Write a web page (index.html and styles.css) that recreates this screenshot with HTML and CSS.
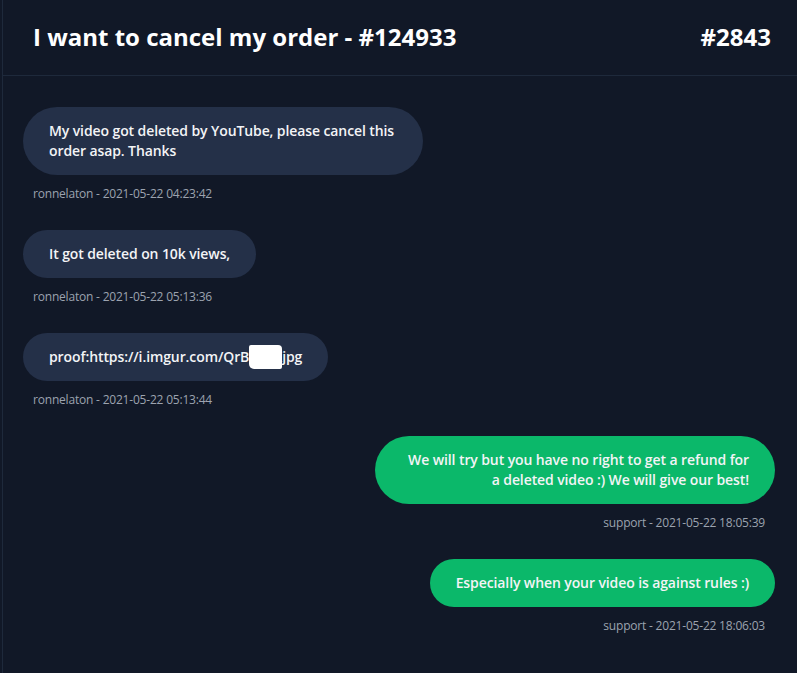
FILE: index.html
```html
<!DOCTYPE html>
<html>
<head>
<meta charset="utf-8">
<link rel="stylesheet" href="styles.css">
</head>
<body>
<div class="panel">
  <header class="head">
    <h1 class="title">I want to cancel my order - #124933</h1>
    <span class="ticket">#2843</span>
  </header>
  <main class="thread">
    <div class="msg">
      <div class="bubble">My video got deleted by YouTube, please cancel this order asap. Thanks</div>
      <div class="meta">ronnelaton - 2021-05-22 04:23:42</div>
    </div>
    <div class="msg">
      <div class="bubble">It got deleted on 10k views,</div>
      <div class="meta">ronnelaton - 2021-05-22 05:13:36</div>
    </div>
    <div class="msg">
      <div class="bubble">proof:https://i.imgur.com/QrB<span class="redact">XXXX</span>jpg</div>
      <div class="meta">ronnelaton - 2021-05-22 05:13:44</div>
    </div>
    <div class="msg mine">
      <div class="bubble">We will try but you have no right to get a refund for a deleted video :) We will give our best!</div>
      <div class="meta">support - 2021-05-22 18:05:39</div>
    </div>
    <div class="msg mine">
      <div class="bubble">Especially when your video is against rules :)</div>
      <div class="meta">support - 2021-05-22 18:06:03</div>
    </div>
  </main>
</div>
</body>
</html>
```
FILE: styles.css
```css
html, body {
  margin: 0;
  padding: 0;
  background: #111827;
  height: 100%;
}
body {
  font-family: "Open Sans", "Noto Sans", sans-serif;
  color: #f3f4f6;
}
.panel {
  margin-left: 2px;
  border-left: 1px solid #1e293b;
  min-height: 100%;
}
.head {
  display: flex;
  align-items: center;
  justify-content: space-between;
  height: 74px;
  padding: 0 26px 1px 30px;
  border-bottom: 1px solid #1e293b;
}
.title, .ticket {
  margin: 0;
  font-size: 24px;
  font-weight: 700;
  color: #ffffff;
  line-height: 1;
}
.thread {
  display: flex;
  flex-direction: column;
  padding: 31px 22px 20px 20px;
  gap: 28px;
}
.msg {
  display: flex;
  flex-direction: column;
  align-items: flex-start;
}
.msg.mine {
  align-items: flex-end;
}
.bubble {
  max-width: 348px;
  padding: 14px 26px;
  border-radius: 34px;
  background: #243048;
  font-size: 14px;
  font-weight: 600;
  line-height: 20px;
  letter-spacing: -0.1px;
  color: #f3f4f6;
}
.mine .bubble {
  background: #0bb86a;
  text-align: right;
}
.redact {
  background: #ffffff;
  color: #ffffff;
  letter-spacing: -1px;
  padding: 2px 1px 3px 1px;
  border-radius: 2px 4px 2px 5px;
}
.meta {
  margin-top: 11px;
  padding: 0 10px;
  font-size: 12px;
  line-height: 16px;
  letter-spacing: -0.2px;
  color: #9ca3af;
}
```
